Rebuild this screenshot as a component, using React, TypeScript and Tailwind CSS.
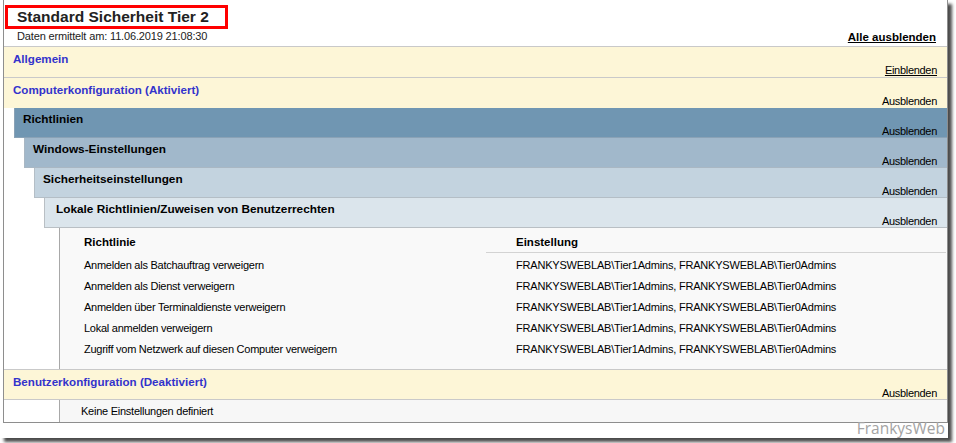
import React from "react";

const rows = [
  "Anmelden als Batchauftrag verweigern",
  "Anmelden als Dienst verweigern",
  "Anmelden über Terminaldienste verweigern",
  "Lokal anmelden verweigern",
  "Zugriff vom Netzwerk auf diesen Computer verweigern",
];
const setting = "FRANKYSWEBLAB\\Tier1Admins, FRANKYSWEBLAB\\Tier0Admins";

function YellowRow({ title, action, underline, h }: { title: string; action: string; underline?: boolean; h: string }) {
  return (
    <div className={`${h} border-t border-[#c9c9c9] bg-[#fdf6d7] pl-[9px] pr-[10px] flex flex-col`}>
      <div className="mt-[5px] leading-[13px] text-[11.6px] font-bold text-[#3333cc] whitespace-nowrap">{title}</div>
      <div className={`mt-[-1px] leading-[13px] text-right text-[11px] tracking-[-0.3px] text-black ${underline ? "underline" : ""}`}>
        {action}
      </div>
    </div>
  );
}

function BlueRow({ title, cls }: { title: string; cls: string }) {
  return (
    <div className={`${cls} h-[30px] border-l border-b pr-[10px] flex flex-col`}>
      <div className="mt-[5px] leading-[13px] text-[11.8px] font-bold text-black whitespace-nowrap">{title}</div>
      <div className="mt-[-1px] leading-[13px] text-right text-[11px] tracking-[-0.3px] text-black">Ausblenden</div>
    </div>
  );
}

export default function App() {
  return (
    <div className="w-[956px] h-[443px] bg-white relative overflow-hidden font-['Liberation_Sans',Arial,sans-serif] text-black">
      <div className="w-[948px] h-[438px] bg-white shadow-[4px_4px_3px_rgba(0,0,0,0.7)]">
        <div className="ml-[3px] w-[945px] h-[423px] border-l border-r border-b border-[#8e8e8e] flex flex-col">
          {/* header */}
          <div className="h-[46px] flex flex-col">
            <div className="mt-[5px] ml-[1px] w-[223px] h-[24px] border-[3px] border-[#ff0000] pl-[9px] flex items-center">
              <span className="text-[15.5px] font-bold text-[#222] leading-[18px] whitespace-nowrap">Standard Sicherheit Tier 2</span>
            </div>
            <div className="mt-[1px] pl-[13px] pr-[11px] flex justify-between items-start">
              <span className="text-[11px] leading-[13px] tracking-[-0.15px] text-[#222]">Daten ermittelt am: 11.06.2019 21:08:30</span>
              <span className="text-[11.5px] leading-[13px] font-bold underline mt-[1px]">Alle ausblenden</span>
            </div>
          </div>

          <YellowRow title="Allgemein" action="Einblenden" underline h="h-[31px]" />
          <YellowRow title="Computerkonfiguration (Aktiviert)" action="Ausblenden" h="h-[31px]" />

          <BlueRow title="Richtlinien" cls="ml-[10px] pl-[8px] bg-[#7096b2] border-[#8aa2b6]" />
          <BlueRow title="Windows-Einstellungen" cls="ml-[20px] pl-[8px] bg-[#a1b8cb] border-[#a9b7c3]" />
          <BlueRow title="Sicherheitseinstellungen" cls="ml-[30px] pl-[8px] bg-[#c3d3df] border-[#b4bec6]" />
          <BlueRow title="Lokale Richtlinien/Zuweisen von Benutzerrechten" cls="ml-[40px] pl-[11px] bg-[#dbe5ec] border-[#b9bfc4]" />

          {/* table */}
          <div className="ml-[55px] h-[141px] border-l border-[#a8a8a8] bg-[#f9f9f9] pl-[24px] pr-[1px]">
            <div className="flex h-[25px]">
              <div className="w-[402px] pt-[8px] leading-[13px] text-[11.5px] font-bold">Richtlinie</div>
              <div className="flex-1 border-b border-[#d3d3d3] pl-[30px] pt-[8px] leading-[13px] text-[11.5px] font-bold">Einstellung</div>
            </div>
            <div className="pt-[2px]">
              {rows.map((r) => (
                <div key={r} className="flex h-[21px] items-center text-[11px] text-black">
                  <div className="w-[402px] whitespace-nowrap tracking-[-0.25px]">{r}</div>
                  <div className="flex-1 pl-[30px] whitespace-nowrap tracking-[-0.2px]">{setting}</div>
                </div>
              ))}
            </div>
          </div>

          <YellowRow title="Benutzerkonfiguration (Deaktiviert)" action="Ausblenden" h="h-[30px]" />

          <div className="h-[23px] border-t border-[#c9c9c9] flex">
            <div className="w-[55px] bg-white" />
            <div className="flex-1 border-l border-[#a8a8a8] bg-[#f7f7f7] pl-[21px] flex items-center text-[11px] tracking-[-0.25px] text-black">
              Keine Einstellungen definiert
            </div>
          </div>
        </div>
      </div>
      <div className="absolute right-[11px] top-[418px] text-[15.5px] leading-[20px] text-[#a3a3a3] font-['Open_Sans',sans-serif]">
        FrankysWeb
      </div>
    </div>
  );
}
